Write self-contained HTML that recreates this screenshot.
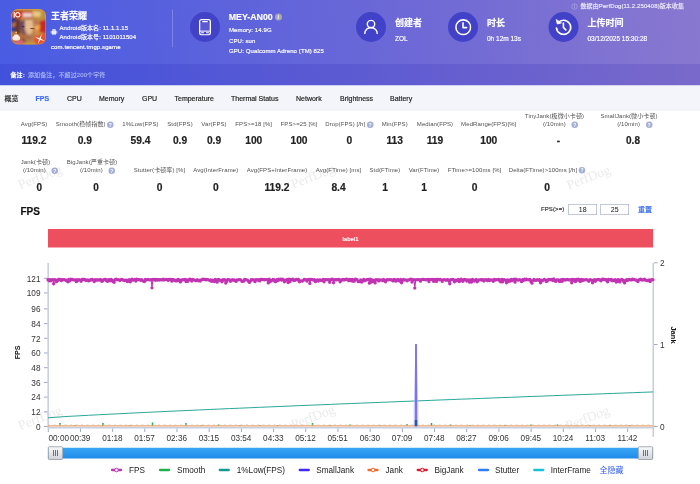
<!DOCTYPE html>
<html lang="zh"><head><meta charset="utf-8"><title>PerfDog</title><style>
html,body{margin:0;padding:0;background:#fff;}
body{width:700px;height:484px;overflow:hidden;position:relative;font-family:"Liberation Sans", "Noto Sans CJK SC", sans-serif;}
#s{position:absolute;left:0;top:0;width:1400px;height:968px;transform:scale(.5);transform-origin:0 0;overflow:hidden;background:#fff}
.t{position:absolute;white-space:nowrap;-webkit-text-stroke:.35px}
#hdr{position:absolute;left:0;top:0;width:1400px;height:171px;background:linear-gradient(83deg,#495ce3 0%,#5b62dc 30%,#6e69d6 60%,#8978cf 100%)}
#rem{position:absolute;left:0;top:128px;width:1400px;height:43px;background:rgba(20,10,170,.12)}
#tabs{position:absolute;left:0;top:171px;width:1400px;height:51px;background:#f4f5fa}
#appicon{position:absolute;left:21.500px;top:17.500px}
.circ{position:absolute;border-radius:50%;background:#4242c8}
.q{position:absolute;border-radius:50%;color:#fff;text-align:center;font-weight:bold;box-sizing:border-box}
.qi{display:inline-block;width:13px;height:13px;border-radius:50%;background:#a3aed6;color:#fff;font-size:10px;line-height:13px;text-align:center;font-weight:bold;vertical-align:-1px;margin-left:3px}
.wm{position:absolute;font-family:"Liberation Serif",serif;font-size:27px;color:#ebebeb;transform:translate(-50%,-50%) rotate(-21deg);white-space:nowrap}
.inp{position:absolute;height:21.500px;line-height:19px;border:1.500px solid #8791b6;box-sizing:border-box;text-align:center;font-size:14px;color:#111;background:#fff}
#lab{position:absolute;background:#ee4f5f;color:#fff;font-size:12px;text-align:center;-webkit-text-stroke:.3px}
</style></head><body><div id="s">
<div id="hdr"></div><div id="rem"></div><div id="tabs"></div>
<svg id="appicon" width="70" height="71" viewBox="0 0 70 71">
<defs><clipPath id="ic"><rect width="70" height="71" rx="14"/></clipPath>
<filter id="b2" x="-20%" y="-20%" width="140%" height="140%"><feGaussianBlur stdDeviation="2.300"/></filter>
<filter id="b1" x="-20%" y="-20%" width="140%" height="140%"><feGaussianBlur stdDeviation=".9"/></filter>
</defs>
<g clip-path="url(#ic)">
<rect width="70" height="71" fill="#c4913e"/>
<g filter="url(#b2)">
<rect x="-2" y="16" width="12" height="29" fill="#2c3a80"/>
<path d="M2 30 L11 24 L12 30 L3 38 Z" fill="#d08030"/>
<rect x="9" y="20" width="10" height="30" fill="#6a3428"/>
<path d="M29 4 L45 -1 L68 2 L70 24 L63 33.500 L57 25 L51 21 L41.500 21 L32 19 L28 13 Z" fill="#c0903f"/>
<path d="M41.500 4 L60 6 L58 16 L44.600 15 Z" fill="#e8ca82"/>
<path d="M28 7 L38 5 L38 19 L28 18 Z" fill="#8e5e2c"/>
<path d="M18.500 24 L29 19 L51 21 L57 25 L55 43 L49 55 L43 66 L32 67 L24.600 58 L18.500 43 Z" fill="#b87c52"/>
<path d="M27.700 22 L43 22 L44.600 37 L41.500 49 L34 51 L27.700 40 Z" fill="#e6bc90"/>
<path d="M17.700 25 L27.700 22 L27 43 L29 55 L21.500 49 L17.700 37 Z" fill="#6e4e62"/>
<path d="M57.700 24 L72 21 L72 49 L58.500 46 L56 43 Z" fill="#c62a20"/>
<path d="M44.600 40 L55 36 L54.600 46 L47.700 54 Z" fill="#d88848"/>
<path d="M47 33.500 L57.700 32 L57 42 L47.700 41 Z" fill="#f4b050"/>
<path d="M47.700 55 L72 48 L72 72 L44.600 72 Z" fill="#e8502e"/>
<path d="M0 49 L26 52 L26 72 L0 72 Z" fill="#b86838"/>
<path d="M24.600 58 L34 68 L27 72 L21 66 Z" fill="#6a3a2a"/>
<rect x="26" y="65.500" width="22" height="7" fill="#c89838"/>
<rect x="7.700" y="64" width="18" height="5" fill="#e06888"/>
<rect x="2.300" y="4.200" width="40.700" height="13.500" fill="#c02a1c"/>
<rect x="23" y="7.500" width="18.800" height="9" fill="#f0d0c8"/>
<path d="M29 55 L40 56.500 L39.700 58.300 L30 57.300 Z" fill="#8a4a3a"/>
</g>
<g filter="url(#b1)">
<ellipse cx="10.500" cy="58" rx="8" ry="5.200" fill="#f6e8d8"/>
<ellipse cx="10.500" cy="54" rx="5" ry="3.300" fill="#fff2e4"/>
<circle cx="10.300" cy="47" r="1.900" fill="#ffc460"/>
<path d="M38.500 37.800 L47.200 39 L47 40.600 L38.800 39.700 Z" fill="#4a2414"/>
<path d="M21.500 34.200 L27 35 L26.800 36.600 L21.800 36 Z" fill="#3a2436"/>
<circle cx="13.500" cy="11.500" r="4.300" fill="none" stroke="#ffeee2" stroke-width="2.300"/>
<circle cx="13.500" cy="11.500" r="2" fill="#d8281c"/>
<rect x="5.200" y="6" width="2.500" height="11.500" fill="#ffeee2"/>
<path d="M57.700 50 L59.200 58.500 L68 60 L59.200 61.500 L57.700 70 L56.200 61.500 L47.500 60 L56.200 58.500 Z" fill="#fff6ea" transform="rotate(22 57.700 60)"/>
</g>
<rect x=".75" y=".75" width="68.500" height="69.500" rx="13.500" fill="none" stroke="#dca844" stroke-width="1.500" opacity=".75"/>
</g></svg>
<div class="t" style="left:102px;top:18.5px;font-size:18px;line-height:25px;color:#fff;font-weight:bold;">王者荣耀</div>
<svg style="position:absolute;left:101px;top:57px" width="14" height="14" viewBox="0 0 14 14"><path d="M2.2 5.2h9.6v5.2a.9.9 0 0 1-.9.9H3.1a.9.9 0 0 1-.9-.9z M2.4 4.6a4.6 3.6 0 0 1 9.2 0z" fill="#e9ecff"/><rect x="0" y="5.2" width="1.7" height="4.6" rx=".8" fill="#e9ecff"/><rect x="12.3" y="5.2" width="1.7" height="4.6" rx=".8" fill="#e9ecff"/><rect x="4" y="10.5" width="1.8" height="3.2" rx=".8" fill="#e9ecff"/><rect x="8.2" y="10.5" width="1.8" height="3.2" rx=".8" fill="#e9ecff"/></svg>
<div class="t" style="left:119px;top:47.5px;font-size:12px;line-height:17px;color:#fff;letter-spacing:.2px;">Android版本名: 11.1.1.15</div>
<div class="t" style="left:119px;top:65.5px;font-size:12px;line-height:17px;color:#fff;letter-spacing:.2px;">Android版本号: 1101011504</div>
<div class="t" style="left:102px;top:84.5px;font-size:12px;line-height:17px;color:#fff;letter-spacing:.2px;">com.tencent.tmgp.sgame</div>
<div style="position:absolute;left:344px;top:19px;width:2px;height:75px;background:rgba(255,255,255,.22)"></div>
<div class="circ" style="left:379.6px;top:23.6px;width:60px;height:60px"></div>
<div class="circ" style="left:711.8px;top:23.6px;width:60px;height:60px"></div>
<div class="circ" style="left:896.4px;top:23.6px;width:60px;height:60px"></div>
<div class="circ" style="left:1096.5px;top:23.6px;width:60px;height:60px"></div>
<svg style="position:absolute;left:398px;top:37.700px" width="24" height="33" viewBox="0 0 24 33" fill="none" stroke="#fff"><rect x="1.300" y="1.300" width="21.400" height="30.400" rx="3.600" stroke-width="2.600"/><rect x="2.600" y="6.500" width="18.800" height="17.500" fill="rgba(255,255,255,.13)" stroke="none"/><path d="M6.500 5.200h11" stroke-width="2.800"/><path d="M2 24.300h20" stroke-width="2"/><path d="M4.200 27.600h5.600M14.200 27.600h5.600" stroke-width="2.200"/></svg>
<svg style="position:absolute;left:728.200px;top:39.300px" width="28" height="30" viewBox="0 0 28 30" fill="none" stroke="#fff" stroke-width="2.800" stroke-linecap="round"><circle cx="14" cy="9.200" r="7.400"/><path d="M1.600 28 A12.400 12 0 0 1 26.400 28"/></svg>
<svg style="position:absolute;left:910.400px;top:37.700px" width="33" height="33" viewBox="0 0 33 33" fill="none" stroke="#fff" stroke-width="3.200" stroke-linecap="round" stroke-linejoin="round"><circle cx="16.500" cy="16.500" r="14.700"/><path d="M16 7.500V17.200H23.300"/></svg>
<svg style="position:absolute;left:1110.400px;top:37px" width="34" height="34" viewBox="0 0 34 34" fill="none" stroke="#fff" stroke-width="3.400" stroke-linecap="round" stroke-linejoin="round"><path d="M6.200 8.600 A14.200 14.200 0 1 1 3 19"/><path d="M2.600 2.800 L4.600 11 L12.400 9 Z" fill="#fff" stroke-width="1.600"/><path d="M16.800 9V17.800L21.600 22.800" stroke-width="3.200"/></svg>
<div class="t" style="left:457.5px;top:21.3px;font-size:17.6px;line-height:25px;color:#fff;font-weight:bold;">MEY-AN00</div>
<div class="q" style="left:549.500px;top:27px;width:14px;height:14px;line-height:14px;font-size:11px;background:#a8a8ae;color:#fff;font-family:'Liberation Serif',serif;font-weight:bold;font-style:italic">i</div>
<div class="t" style="left:458px;top:51.5px;font-size:12px;line-height:17px;color:#fff;letter-spacing:.2px;">Memory: 14.9G</div>
<div class="t" style="left:458px;top:72.5px;font-size:12px;line-height:17px;color:#fff;letter-spacing:.2px;">CPU: sun</div>
<div class="t" style="left:458px;top:93.5px;font-size:12px;line-height:17px;color:#fff;letter-spacing:.2px;">GPU: Qualcomm Adreno (TM) 825</div>
<div class="t" style="left:790px;top:32.5px;font-size:18px;line-height:25px;color:#fff;font-weight:bold;">创建者</div>
<div class="t" style="left:790px;top:68.5px;font-size:13px;line-height:18px;color:#fff;">ZOL</div>
<div class="t" style="left:974px;top:32.5px;font-size:18px;line-height:25px;color:#fff;font-weight:bold;">时长</div>
<div class="t" style="left:974px;top:68.5px;font-size:13px;line-height:18px;color:#fff;">0h 12m 13s</div>
<div class="t" style="left:1175px;top:32.5px;font-size:18px;line-height:25px;color:#fff;font-weight:bold;">上传时间</div>
<div class="t" style="left:1175px;top:68.5px;font-size:13px;line-height:18px;color:#fff;">03/12/2025 15:30:28</div>
<div class="q" style="left:1142.500px;top:7px;width:12px;height:12px;line-height:10px;font-size:9px;background:none;border:1px solid rgba(255,255,255,.5);color:rgba(255,255,255,.6);font-weight:normal">i</div>
<div class="t" style="left:1161px;top:4.0px;font-size:12px;line-height:17px;color:rgba(255,255,255,.8);letter-spacing:.2px;">数据由PerfDog(11.2.250408)版本收集</div>
<div class="t" style="left:21px;top:141.5px;font-size:12px;line-height:17px;color:#fff;font-weight:bold;letter-spacing:.2px;">备注:</div>
<div class="t" style="left:56px;top:141.5px;font-size:12px;line-height:17px;color:#a9b6f3;letter-spacing:.2px;">添加备注，不超过200个字符</div>
<div class="t" style="left:9px;top:187.0px;font-size:14px;line-height:20px;color:#222;">概览</div>
<div class="t" style="left:71px;top:187.0px;font-size:14px;line-height:20px;color:#3d6bf0;font-weight:bold;">FPS</div>
<div class="t" style="left:134px;top:187.0px;font-size:14px;line-height:20px;color:#222;">CPU</div>
<div class="t" style="left:198px;top:187.0px;font-size:14px;line-height:20px;color:#222;">Memory</div>
<div class="t" style="left:284px;top:187.0px;font-size:14px;line-height:20px;color:#222;">GPU</div>
<div class="t" style="left:349px;top:187.0px;font-size:14px;line-height:20px;color:#222;">Temperature</div>
<div class="t" style="left:462px;top:187.0px;font-size:14px;line-height:20px;color:#222;">Thermal Status</div>
<div class="t" style="left:592px;top:187.0px;font-size:14px;line-height:20px;color:#222;">Network</div>
<div class="t" style="left:680px;top:187.0px;font-size:14px;line-height:20px;color:#222;">Brightness</div>
<div class="t" style="left:780px;top:187.0px;font-size:14px;line-height:20px;color:#222;">Battery</div>
<div class="wm" style="left:80px;top:354px">PerfDog</div>
<div class="wm" style="left:626px;top:353px">PerfDog</div>
<div class="wm" style="left:1177px;top:354.5px">PerfDog</div>
<div class="wm" style="left:80px;top:836px">PerfDog</div>
<div class="wm" style="left:626px;top:834px">PerfDog</div>
<div class="wm" style="left:1175px;top:835.5px">PerfDog</div>
<div class="t" style="left:68px;top:240.0px;font-size:12px;line-height:17px;color:#505050;letter-spacing:.2px;transform:translateX(-50%);-webkit-text-stroke:0;">Avg(FPS)</div>
<div class="t" style="left:68px;top:265.5px;font-size:20.5px;line-height:29px;color:#222;font-weight:bold;transform:translateX(-50%);">119.2</div>
<div class="t" style="left:169.5px;top:240.0px;font-size:12px;line-height:17px;color:#505050;letter-spacing:.2px;transform:translateX(-50%);-webkit-text-stroke:0;">Smooth(稳帧指数)<span class="qi">?</span></div>
<div class="t" style="left:169.5px;top:265.5px;font-size:20.5px;line-height:29px;color:#222;font-weight:bold;transform:translateX(-50%);">0.9</div>
<div class="t" style="left:281px;top:240.0px;font-size:12px;line-height:17px;color:#505050;letter-spacing:.2px;transform:translateX(-50%);-webkit-text-stroke:0;">1%Low(FPS)</div>
<div class="t" style="left:281px;top:265.5px;font-size:20.5px;line-height:29px;color:#222;font-weight:bold;transform:translateX(-50%);">59.4</div>
<div class="t" style="left:360px;top:240.0px;font-size:12px;line-height:17px;color:#505050;letter-spacing:.2px;transform:translateX(-50%);-webkit-text-stroke:0;">Std(FPS)</div>
<div class="t" style="left:360px;top:265.5px;font-size:20.5px;line-height:29px;color:#222;font-weight:bold;transform:translateX(-50%);">0.9</div>
<div class="t" style="left:428px;top:240.0px;font-size:12px;line-height:17px;color:#505050;letter-spacing:.2px;transform:translateX(-50%);-webkit-text-stroke:0;">Var(FPS)</div>
<div class="t" style="left:428px;top:265.5px;font-size:20.5px;line-height:29px;color:#222;font-weight:bold;transform:translateX(-50%);">0.9</div>
<div class="t" style="left:507.5px;top:240.0px;font-size:12px;line-height:17px;color:#505050;letter-spacing:.2px;transform:translateX(-50%);-webkit-text-stroke:0;">FPS&gt;=18 [%]</div>
<div class="t" style="left:507.5px;top:265.5px;font-size:20.5px;line-height:29px;color:#222;font-weight:bold;transform:translateX(-50%);">100</div>
<div class="t" style="left:598px;top:240.0px;font-size:12px;line-height:17px;color:#505050;letter-spacing:.2px;transform:translateX(-50%);-webkit-text-stroke:0;">FPS&gt;=25 [%]</div>
<div class="t" style="left:598px;top:265.5px;font-size:20.5px;line-height:29px;color:#222;font-weight:bold;transform:translateX(-50%);">100</div>
<div class="t" style="left:698.5px;top:240.0px;font-size:12px;line-height:17px;color:#505050;letter-spacing:.2px;transform:translateX(-50%);-webkit-text-stroke:0;">Drop(FPS) [/h]<span class="qi">?</span></div>
<div class="t" style="left:698.5px;top:265.5px;font-size:20.5px;line-height:29px;color:#222;font-weight:bold;transform:translateX(-50%);">0</div>
<div class="t" style="left:789.5px;top:240.0px;font-size:12px;line-height:17px;color:#505050;letter-spacing:.2px;transform:translateX(-50%);-webkit-text-stroke:0;">Min(FPS)</div>
<div class="t" style="left:789.5px;top:265.5px;font-size:20.5px;line-height:29px;color:#222;font-weight:bold;transform:translateX(-50%);">113</div>
<div class="t" style="left:870px;top:240.0px;font-size:12px;line-height:17px;color:#505050;letter-spacing:.2px;transform:translateX(-50%);-webkit-text-stroke:0;">Median(FPS)</div>
<div class="t" style="left:870px;top:265.5px;font-size:20.5px;line-height:29px;color:#222;font-weight:bold;transform:translateX(-50%);">119</div>
<div class="t" style="left:977.5px;top:240.0px;font-size:12px;line-height:17px;color:#505050;letter-spacing:.2px;transform:translateX(-50%);-webkit-text-stroke:0;">MedRange(FPS)[%]</div>
<div class="t" style="left:977.5px;top:265.5px;font-size:20.5px;line-height:29px;color:#222;font-weight:bold;transform:translateX(-50%);">100</div>
<div class="t" style="left:1109px;top:223.5px;font-size:12px;line-height:17px;color:#505050;letter-spacing:.2px;transform:translateX(-50%);-webkit-text-stroke:0;">TinyJank(极微小卡顿)</div>
<div class="t" style="left:1121px;top:239.5px;font-size:12px;line-height:17px;color:#505050;letter-spacing:.2px;transform:translateX(-50%);-webkit-text-stroke:0;">(/10min) <span class="qi" style="margin-left:8px">?</span></div>
<div class="t" style="left:1117px;top:266.0px;font-size:20px;line-height:28px;color:#222;font-weight:bold;transform:translateX(-50%);">-</div>
<div class="t" style="left:1258px;top:223.5px;font-size:12px;line-height:17px;color:#505050;letter-spacing:.2px;transform:translateX(-50%);-webkit-text-stroke:0;">SmallJank(微小卡顿)</div>
<div class="t" style="left:1269.5px;top:239.5px;font-size:12px;line-height:17px;color:#505050;letter-spacing:.2px;transform:translateX(-50%);-webkit-text-stroke:0;">(/10min) <span class="qi" style="margin-left:8px">?</span></div>
<div class="t" style="left:1266px;top:266.0px;font-size:20px;line-height:28px;color:#222;font-weight:bold;transform:translateX(-50%);">0.8</div>
<div class="t" style="left:71px;top:316.0px;font-size:12px;line-height:17px;color:#505050;letter-spacing:.2px;transform:translateX(-50%);-webkit-text-stroke:0;">Jank(卡顿)</div>
<div class="t" style="left:81px;top:331.5px;font-size:12px;line-height:17px;color:#505050;letter-spacing:.2px;transform:translateX(-50%);-webkit-text-stroke:0;">(/10min) <span class="qi" style="margin-left:8px">?</span></div>
<div class="t" style="left:78.5px;top:359.5px;font-size:20px;line-height:28px;color:#222;font-weight:bold;transform:translateX(-50%);">0</div>
<div class="t" style="left:184px;top:316.0px;font-size:12px;line-height:17px;color:#505050;letter-spacing:.2px;transform:translateX(-50%);-webkit-text-stroke:0;">BigJank(严重卡顿)</div>
<div class="t" style="left:195px;top:331.5px;font-size:12px;line-height:17px;color:#505050;letter-spacing:.2px;transform:translateX(-50%);-webkit-text-stroke:0;">(/10min) <span class="qi" style="margin-left:8px">?</span></div>
<div class="t" style="left:192px;top:359.5px;font-size:20px;line-height:28px;color:#222;font-weight:bold;transform:translateX(-50%);">0</div>
<div class="t" style="left:319px;top:330.5px;font-size:12px;line-height:17px;color:#505050;letter-spacing:.2px;transform:translateX(-50%);-webkit-text-stroke:0;">Stutter(卡顿率) [%]</div>
<div class="t" style="left:319px;top:359.0px;font-size:20.5px;line-height:29px;color:#222;font-weight:bold;transform:translateX(-50%);">0</div>
<div class="t" style="left:431.5px;top:330.5px;font-size:12px;line-height:17px;color:#505050;letter-spacing:.2px;transform:translateX(-50%);-webkit-text-stroke:0;">Avg(InterFrame)</div>
<div class="t" style="left:431.5px;top:359.0px;font-size:20.5px;line-height:29px;color:#222;font-weight:bold;transform:translateX(-50%);">0</div>
<div class="t" style="left:554px;top:330.5px;font-size:12px;line-height:17px;color:#505050;letter-spacing:.2px;transform:translateX(-50%);-webkit-text-stroke:0;">Avg(FPS+InterFrame)</div>
<div class="t" style="left:554px;top:359.0px;font-size:20.5px;line-height:29px;color:#222;font-weight:bold;transform:translateX(-50%);">119.2</div>
<div class="t" style="left:677px;top:330.5px;font-size:12px;line-height:17px;color:#505050;letter-spacing:.2px;transform:translateX(-50%);-webkit-text-stroke:0;">Avg(FTime) [ms]</div>
<div class="t" style="left:677px;top:359.0px;font-size:20.5px;line-height:29px;color:#222;font-weight:bold;transform:translateX(-50%);">8.4</div>
<div class="t" style="left:770px;top:330.5px;font-size:12px;line-height:17px;color:#505050;letter-spacing:.2px;transform:translateX(-50%);-webkit-text-stroke:0;">Std(FTime)</div>
<div class="t" style="left:770px;top:359.0px;font-size:20.5px;line-height:29px;color:#222;font-weight:bold;transform:translateX(-50%);">1</div>
<div class="t" style="left:848px;top:330.5px;font-size:12px;line-height:17px;color:#505050;letter-spacing:.2px;transform:translateX(-50%);-webkit-text-stroke:0;">Var(FTime)</div>
<div class="t" style="left:848px;top:359.0px;font-size:20.5px;line-height:29px;color:#222;font-weight:bold;transform:translateX(-50%);">1</div>
<div class="t" style="left:949px;top:330.5px;font-size:12px;line-height:17px;color:#505050;letter-spacing:.2px;transform:translateX(-50%);-webkit-text-stroke:0;">FTime&gt;=100ms [%]</div>
<div class="t" style="left:949px;top:359.0px;font-size:20.5px;line-height:29px;color:#222;font-weight:bold;transform:translateX(-50%);">0</div>
<div class="t" style="left:1094px;top:330.5px;font-size:12px;line-height:17px;color:#505050;letter-spacing:.2px;transform:translateX(-50%);-webkit-text-stroke:0;">Delta(FTime)&gt;100ms [/h]<span class="qi">?</span></div>
<div class="t" style="left:1094px;top:359.0px;font-size:20.5px;line-height:29px;color:#222;font-weight:bold;transform:translateX(-50%);">0</div>
<div class="t" style="left:41px;top:409.0px;font-size:20px;line-height:28px;color:#111;font-weight:bold;">FPS</div>
<div class="t" style="left:1082px;top:410.0px;font-size:12px;line-height:17px;color:#333;letter-spacing:.2px;">FPS(&gt;=)</div>
<div class="inp" style="left:1137px;top:408px;width:57px">18</div>
<div class="inp" style="left:1201px;top:408px;width:57px">25</div>
<div class="t" style="left:1276px;top:408.5px;font-size:14px;line-height:20px;color:#2b62f0;">重置</div>
<div id="lab" style="left:96px;top:457.500px;width:1210px;height:37.500px;line-height:41px">label1</div>
<svg id="chart" width="1400" height="968" viewBox="0 0 1400 968" style="position:absolute;left:0;top:0" font-family='"Liberation Sans", "Noto Sans CJK SC", sans-serif'>
<path d="M96.3 526V856.0 M1306.5 526V874.0" stroke="#c6cde0" stroke-width="3" fill="none"/>
<path d="M95 855.5H1308" stroke="#c6cde0" stroke-width="3" fill="none"/>
<path d="M88 853.0H95" stroke="#9ea9c4" stroke-width="2"/>
<text x="81" y="859.5" font-size="16.500" fill="#333" text-anchor="end">0</text>
<path d="M88 823.6H95" stroke="#9ea9c4" stroke-width="2"/>
<text x="81" y="830.1" font-size="16.500" fill="#333" text-anchor="end">12</text>
<path d="M88 794.2H95" stroke="#9ea9c4" stroke-width="2"/>
<text x="81" y="800.7" font-size="16.500" fill="#333" text-anchor="end">24</text>
<path d="M88 764.8H95" stroke="#9ea9c4" stroke-width="2"/>
<text x="81" y="771.3" font-size="16.500" fill="#333" text-anchor="end">36</text>
<path d="M88 735.4H95" stroke="#9ea9c4" stroke-width="2"/>
<text x="81" y="741.9" font-size="16.500" fill="#333" text-anchor="end">48</text>
<path d="M88 706.0H95" stroke="#9ea9c4" stroke-width="2"/>
<text x="81" y="712.5" font-size="16.500" fill="#333" text-anchor="end">60</text>
<path d="M88 676.6H95" stroke="#9ea9c4" stroke-width="2"/>
<text x="81" y="683.1" font-size="16.500" fill="#333" text-anchor="end">72</text>
<path d="M88 647.2H95" stroke="#9ea9c4" stroke-width="2"/>
<text x="81" y="653.7" font-size="16.500" fill="#333" text-anchor="end">84</text>
<path d="M88 617.8H95" stroke="#9ea9c4" stroke-width="2"/>
<text x="81" y="624.3" font-size="16.500" fill="#333" text-anchor="end">96</text>
<path d="M88 585.9H95" stroke="#9ea9c4" stroke-width="2"/>
<text x="81" y="592.4" font-size="16.500" fill="#333" text-anchor="end">109</text>
<path d="M88 556.5H95" stroke="#9ea9c4" stroke-width="2"/>
<text x="81" y="563.0" font-size="16.500" fill="#333" text-anchor="end">121</text>
<path d="M1308 525.5H1315" stroke="#9ea9c4" stroke-width="2"/>
<text x="1320" y="532.0" font-size="16.500" fill="#333">2</text>
<path d="M1308 689H1315" stroke="#9ea9c4" stroke-width="2"/>
<text x="1320" y="695.5" font-size="16.500" fill="#333">1</text>
<path d="M1308 853H1315" stroke="#9ea9c4" stroke-width="2"/>
<text x="1320" y="859.5" font-size="16.500" fill="#333">0</text>
<path d="M96.5 857.0V864.0" stroke="#9ea9c4" stroke-width="2"/>
<text x="97" y="881.0" font-size="16.400" fill="#333">00:00</text>
<path d="M160.9 857.0V864.0" stroke="#9ea9c4" stroke-width="2"/>
<text x="160.4" y="881.0" font-size="16.400" fill="#333" text-anchor="middle">00:39</text>
<path d="M225.3 857.0V864.0" stroke="#9ea9c4" stroke-width="2"/>
<text x="224.8" y="881.0" font-size="16.400" fill="#333" text-anchor="middle">01:18</text>
<path d="M289.6 857.0V864.0" stroke="#9ea9c4" stroke-width="2"/>
<text x="289.1" y="881.0" font-size="16.400" fill="#333" text-anchor="middle">01:57</text>
<path d="M354.0 857.0V864.0" stroke="#9ea9c4" stroke-width="2"/>
<text x="353.5" y="881.0" font-size="16.400" fill="#333" text-anchor="middle">02:36</text>
<path d="M418.4 857.0V864.0" stroke="#9ea9c4" stroke-width="2"/>
<text x="417.9" y="881.0" font-size="16.400" fill="#333" text-anchor="middle">03:15</text>
<path d="M482.8 857.0V864.0" stroke="#9ea9c4" stroke-width="2"/>
<text x="482.3" y="881.0" font-size="16.400" fill="#333" text-anchor="middle">03:54</text>
<path d="M547.2 857.0V864.0" stroke="#9ea9c4" stroke-width="2"/>
<text x="546.7" y="881.0" font-size="16.400" fill="#333" text-anchor="middle">04:33</text>
<path d="M611.5 857.0V864.0" stroke="#9ea9c4" stroke-width="2"/>
<text x="611.0" y="881.0" font-size="16.400" fill="#333" text-anchor="middle">05:12</text>
<path d="M675.9 857.0V864.0" stroke="#9ea9c4" stroke-width="2"/>
<text x="675.4" y="881.0" font-size="16.400" fill="#333" text-anchor="middle">05:51</text>
<path d="M740.3 857.0V864.0" stroke="#9ea9c4" stroke-width="2"/>
<text x="739.8" y="881.0" font-size="16.400" fill="#333" text-anchor="middle">06:30</text>
<path d="M804.7 857.0V864.0" stroke="#9ea9c4" stroke-width="2"/>
<text x="804.2" y="881.0" font-size="16.400" fill="#333" text-anchor="middle">07:09</text>
<path d="M869.1 857.0V864.0" stroke="#9ea9c4" stroke-width="2"/>
<text x="868.6" y="881.0" font-size="16.400" fill="#333" text-anchor="middle">07:48</text>
<path d="M933.4 857.0V864.0" stroke="#9ea9c4" stroke-width="2"/>
<text x="932.9" y="881.0" font-size="16.400" fill="#333" text-anchor="middle">08:27</text>
<path d="M997.8 857.0V864.0" stroke="#9ea9c4" stroke-width="2"/>
<text x="997.3" y="881.0" font-size="16.400" fill="#333" text-anchor="middle">09:06</text>
<path d="M1062.2 857.0V864.0" stroke="#9ea9c4" stroke-width="2"/>
<text x="1061.7" y="881.0" font-size="16.400" fill="#333" text-anchor="middle">09:45</text>
<path d="M1126.6 857.0V864.0" stroke="#9ea9c4" stroke-width="2"/>
<text x="1126.1" y="881.0" font-size="16.400" fill="#333" text-anchor="middle">10:24</text>
<path d="M1190.9 857.0V864.0" stroke="#9ea9c4" stroke-width="2"/>
<text x="1190.4" y="881.0" font-size="16.400" fill="#333" text-anchor="middle">11:03</text>
<path d="M1255.3 857.0V864.0" stroke="#9ea9c4" stroke-width="2"/>
<text x="1254.8" y="881.0" font-size="16.400" fill="#333" text-anchor="middle">11:42</text>
<text transform="translate(40,705) rotate(-90)" font-size="14" font-weight="bold" fill="#111" text-anchor="middle">FPS</text>
<text transform="translate(1342,670) rotate(90)" font-size="15" font-weight="bold" fill="#111" text-anchor="middle">Jank</text>
<polyline points="96.0,835.6 116.2,834.1 136.3,832.8 156.5,831.7 176.7,830.6 196.8,829.5 217.0,828.5 237.2,827.5 257.3,826.5 277.5,825.5 297.7,824.5 317.8,823.6 338.0,822.6 358.2,821.7 378.3,820.8 398.5,819.9 418.7,819.0 438.8,818.1 459.0,817.2 479.2,816.4 499.3,815.5 519.5,814.6 539.7,813.8 559.8,812.9 580.0,812.1 600.2,811.2 620.3,810.4 640.5,809.6 660.7,808.8 680.8,807.9 701.0,807.1 721.2,806.3 741.3,805.5 761.5,804.7 781.7,803.9 801.8,803.1 822.0,802.3 842.2,801.5 862.3,800.7 882.5,799.9 902.7,799.1 922.8,798.3 943.0,797.6 963.2,796.8 983.3,796.0 1003.5,795.2 1023.7,794.5 1043.8,793.7 1064.0,792.9 1084.2,792.2 1104.3,791.4 1124.5,790.6 1144.7,789.9 1164.8,789.1 1185.0,788.4 1205.2,787.6 1225.3,786.9 1245.5,786.1 1265.7,785.4 1285.8,784.6 1306.0,783.9" fill="none" stroke="#2aa79b" stroke-width="2"/>
<path d="M120 852.0v-6M206 852.0v-6M305 852.0v-7.0M372 852.0v-6M625 852.0v-6M814 852.0v-4M863 852.0v-6M403 852.0v-2M437 852.0v-3.0M555 852.0v-2M700 852.0v-3.0M760 852.0v-2M901 852.0v-3.0M1010 852.0v-2M1062 852.0v-3.0M1115 852.0v-3.0M1180 852.0v-2M1260 852.0v-2M150 852.0v-2M260 852.0v-2M480 852.0v-2M520 852.0v-2M660 852.0v-2M940 852.0v-2M1220 852.0v-2" stroke="#19b24b" stroke-width="3" fill="none"/>
<path d="M96 851.5H1306" stroke="#e9a070" stroke-width="2.500" fill="none"/>
<path d="M96 849.5H1306" stroke="#d8c9a0" stroke-width="1.500" stroke-dasharray="4 7" fill="none" opacity=".8"/>
<path d="M827.5 853.0V813.0L831 689h2L836.5 813.0V853.0Z" fill="#b2aefa" opacity=".7"/>
<path d="M832 853.0V688" stroke="#6258f0" stroke-width="3" fill="none"/>
<rect x="829.5" y="840.0" width="5" height="12" fill="#2b5a9a"/>
<polyline points="96.0,559.5 97.9,561.7 99.8,559.4 101.7,561.5 103.6,559.1 105.5,559.2 107.3,567.5 109.2,559.1 111.1,559.8 113.0,563.3 114.9,561.4 116.8,559.0 118.7,559.0 120.6,558.7 122.5,561.1 124.4,559.4 126.2,559.7 128.1,559.1 130.0,559.6 131.9,561.2 133.8,560.4 135.7,563.6 137.6,558.9 139.5,561.5 141.4,558.5 143.3,559.1 145.2,559.0 147.0,559.6 148.9,559.8 150.8,559.6 152.7,563.3 154.6,559.2 156.5,560.5 158.4,559.4 160.3,560.1 162.2,562.7 164.1,559.0 166.0,559.0 167.8,558.8 169.7,559.0 171.6,561.2 173.5,560.3 175.4,559.8 177.3,561.9 179.2,561.0 181.1,559.3 183.0,559.8 184.9,558.8 186.8,560.1 188.6,563.2 190.5,559.1 192.4,560.4 194.3,559.5 196.2,560.4 198.1,559.2 200.0,560.0 201.9,559.2 203.8,562.9 205.7,561.6 207.5,559.5 209.4,558.6 211.3,558.6 213.2,561.6 215.1,562.9 217.0,559.3 218.9,559.2 220.8,561.6 222.7,558.8 224.6,560.9 226.5,563.4 228.3,564.7 230.2,559.5 232.1,558.3 234.0,559.4 235.9,559.3 237.8,559.7 239.7,561.0 241.6,559.3 243.5,558.8 245.4,559.5 247.2,560.5 249.1,561.1 251.0,560.1 252.9,560.1 254.8,563.0 256.7,560.1 258.6,559.1 260.5,563.7 262.4,559.8 264.3,558.5 266.2,560.4 268.0,559.9 269.9,558.6 271.8,562.0 273.7,558.5 275.6,559.4 277.5,559.3 279.4,559.3 281.3,560.6 283.2,559.5 285.1,561.1 287.0,562.5 288.8,563.2 290.7,558.8 292.6,560.0 294.5,559.1 296.4,558.8 298.3,559.6 300.2,559.7 302.1,559.3 304.0,575.6 305.9,558.8 307.8,559.6 309.6,558.7 311.5,560.6 313.4,558.9 315.3,560.0 317.2,559.4 319.1,560.0 321.0,559.1 322.9,559.5 324.8,559.9 326.7,558.5 328.5,559.6 330.4,559.4 332.3,558.6 334.2,559.1 336.1,560.9 338.0,558.6 339.9,559.0 341.8,558.8 343.7,562.4 345.6,558.9 347.5,559.4 349.3,560.9 351.2,561.5 353.1,561.8 355.0,559.4 356.9,558.6 358.8,561.3 360.7,563.9 362.6,559.8 364.5,560.2 366.4,559.4 368.2,559.4 370.1,559.0 372.0,563.1 373.9,559.7 375.8,562.6 377.7,559.5 379.6,558.2 381.5,558.8 383.4,562.1 385.3,558.8 387.2,559.7 389.0,560.1 390.9,561.2 392.8,561.0 394.7,559.5 396.6,561.5 398.5,560.9 400.4,562.2 402.3,559.7 404.2,559.4 406.1,558.5 408.0,558.7 409.8,559.0 411.7,559.8 413.6,558.8 415.5,559.4 417.4,559.7 419.3,561.1 421.2,560.0 423.1,562.6 425.0,560.5 426.9,562.3 428.8,563.0 430.6,558.8 432.5,559.7 434.4,564.4 436.3,558.8 438.2,559.3 440.1,560.9 442.0,561.0 443.9,563.7 445.8,559.3 447.7,560.2 449.5,559.5 451.4,566.2 453.3,563.0 455.2,559.4 457.1,559.4 459.0,559.9 460.9,562.6 462.8,560.3 464.7,559.3 466.6,560.3 468.5,559.9 470.3,561.4 472.2,562.8 474.1,560.0 476.0,559.6 477.9,559.4 479.8,559.3 481.7,560.0 483.6,562.7 485.5,562.6 487.4,562.4 489.2,558.7 491.1,559.4 493.0,559.7 494.9,560.2 496.8,562.4 498.7,564.9 500.6,562.3 502.5,559.3 504.4,559.5 506.3,559.7 508.2,559.6 510.0,563.4 511.9,559.2 513.8,559.4 515.7,560.4 517.6,559.4 519.5,561.8 521.4,558.6 523.3,558.6 525.2,558.6 527.1,559.4 529.0,559.7 530.8,559.3 532.7,559.3 534.6,559.4 536.5,565.8 538.4,558.4 540.3,563.2 542.2,561.8 544.1,560.4 546.0,558.6 547.9,559.3 549.8,563.0 551.6,563.1 553.5,559.3 555.4,561.1 557.3,558.2 559.2,559.6 561.1,558.2 563.0,560.0 564.9,558.5 566.8,559.1 568.7,563.5 570.5,562.2 572.4,559.6 574.3,558.9 576.2,565.1 578.1,558.5 580.0,563.0 581.9,559.0 583.8,559.1 585.7,558.2 587.6,561.2 589.5,560.8 591.3,559.4 593.2,558.6 595.1,559.8 597.0,559.0 598.9,563.5 600.8,561.7 602.7,561.9 604.6,562.4 606.5,560.6 608.4,558.9 610.2,559.2 612.1,559.3 614.0,562.3 615.9,559.2 617.8,558.8 619.7,566.8 621.6,558.9 623.5,558.8 625.4,559.5 627.3,560.1 629.2,559.5 631.0,563.3 632.9,561.4 634.8,559.7 636.7,562.1 638.6,559.6 640.5,559.6 642.4,561.0 644.3,560.6 646.2,559.0 648.1,563.7 650.0,559.3 651.8,559.4 653.7,559.2 655.6,559.7 657.5,559.1 659.4,564.5 661.3,559.2 663.2,559.0 665.1,558.4 667.0,565.6 668.9,559.6 670.8,559.3 672.6,559.8 674.5,559.2 676.4,559.0 678.3,559.0 680.2,563.5 682.1,561.4 684.0,559.2 685.9,558.7 687.8,559.9 689.7,559.5 691.5,559.0 693.4,558.5 695.3,559.2 697.2,561.4 699.1,559.0 701.0,559.1 702.9,561.5 704.8,558.9 706.7,562.7 708.6,562.3 710.5,558.5 712.3,558.8 714.2,559.2 716.1,563.1 718.0,562.6 719.9,563.0 721.8,559.6 723.7,564.1 725.6,561.9 727.5,558.7 729.4,561.4 731.2,560.7 733.1,559.1 735.0,559.3 736.9,558.7 738.8,566.3 740.7,558.4 742.6,564.1 744.5,560.0 746.4,562.7 748.3,560.7 750.2,565.9 752.0,559.2 753.9,560.2 755.8,559.4 757.7,561.8 759.6,559.9 761.5,559.7 763.4,560.1 765.3,561.4 767.2,558.6 769.1,561.1 771.0,563.5 772.8,559.7 774.7,559.5 776.6,559.7 778.5,559.3 780.4,559.1 782.3,559.3 784.2,560.6 786.1,561.9 788.0,558.6 789.9,559.4 791.8,562.4 793.6,559.8 795.5,558.7 797.4,561.0 799.3,562.0 801.2,559.0 803.1,565.5 805.0,561.2 806.9,559.0 808.8,559.7 810.7,559.9 812.5,560.4 814.4,561.5 816.3,559.8 818.2,559.6 820.1,558.7 822.0,558.1 823.9,564.0 825.8,559.3 827.7,559.3 829.6,576.1 831.5,559.8 833.3,559.3 835.2,559.2 837.1,559.1 839.0,559.4 840.9,562.3 842.8,559.3 844.7,558.8 846.6,558.9 848.5,559.2 850.4,559.1 852.2,559.5 854.1,559.3 856.0,558.7 857.9,563.2 859.8,559.2 861.7,558.8 863.6,559.2 865.5,559.0 867.4,562.8 869.3,559.1 871.2,558.6 873.0,562.8 874.9,558.8 876.8,558.8 878.7,559.5 880.6,558.8 882.5,559.6 884.4,562.8 886.3,559.7 888.2,559.3 890.1,559.6 892.0,560.6 893.8,559.5 895.7,559.2 897.6,561.9 899.5,567.5 901.4,559.5 903.3,559.3 905.2,559.0 907.1,559.4 909.0,563.5 910.9,560.3 912.8,561.7 914.6,559.6 916.5,558.9 918.4,563.0 920.3,562.1 922.2,558.3 924.1,559.2 926.0,562.7 927.9,559.2 929.8,559.0 931.7,559.1 933.5,562.2 935.4,559.7 937.3,559.7 939.2,564.4 941.1,559.9 943.0,564.2 944.9,558.7 946.8,559.9 948.7,562.0 950.6,561.4 952.5,559.0 954.3,563.7 956.2,561.2 958.1,559.7 960.0,559.7 961.9,559.1 963.8,560.0 965.7,559.5 967.6,562.0 969.5,559.6 971.4,559.5 973.2,559.9 975.1,561.4 977.0,558.7 978.9,561.0 980.8,559.7 982.7,559.9 984.6,560.5 986.5,562.7 988.4,558.7 990.3,560.3 992.2,559.3 994.0,559.4 995.9,559.1 997.8,559.0 999.7,561.9 1001.6,563.9 1003.5,558.6 1005.4,563.6 1007.3,559.3 1009.2,559.9 1011.1,560.4 1013.0,565.5 1014.8,559.7 1016.7,563.0 1018.6,560.2 1020.5,562.0 1022.4,559.0 1024.3,561.2 1026.2,559.2 1028.1,558.4 1030.0,564.4 1031.9,558.3 1033.8,559.9 1035.6,559.9 1037.5,560.3 1039.4,559.1 1041.3,560.1 1043.2,563.4 1045.1,559.5 1047.0,560.5 1048.9,558.3 1050.8,559.6 1052.7,558.5 1054.5,559.1 1056.4,559.3 1058.3,559.5 1060.2,558.9 1062.1,564.0 1064.0,566.3 1065.9,561.1 1067.8,558.8 1069.7,560.1 1071.6,560.9 1073.5,559.6 1075.3,559.2 1077.2,560.7 1079.1,559.5 1081.0,565.7 1082.9,560.4 1084.8,561.6 1086.7,560.2 1088.6,559.0 1090.5,559.7 1092.4,563.0 1094.2,562.7 1096.1,559.3 1098.0,558.7 1099.9,559.3 1101.8,559.1 1103.7,558.7 1105.6,561.1 1107.5,558.0 1109.4,559.6 1111.3,562.8 1113.2,559.6 1115.0,560.2 1116.9,559.8 1118.8,562.8 1120.7,562.8 1122.6,559.3 1124.5,562.6 1126.4,558.6 1128.3,559.3 1130.2,560.2 1132.1,559.5 1134.0,559.0 1135.8,559.3 1137.7,559.6 1139.6,559.6 1141.5,559.5 1143.4,565.6 1145.3,559.0 1147.2,561.2 1149.1,559.1 1151.0,563.2 1152.9,558.9 1154.8,560.4 1156.6,558.5 1158.5,559.1 1160.4,563.2 1162.3,559.0 1164.2,561.3 1166.1,559.1 1168.0,560.1 1169.9,559.6 1171.8,559.3 1173.7,559.4 1175.5,560.5 1177.4,562.6 1179.3,559.9 1181.2,559.2 1183.1,560.1 1185.0,565.7 1186.9,562.1 1188.8,559.1 1190.7,562.5 1192.6,560.0 1194.5,559.1 1196.3,559.0 1198.2,559.5 1200.1,559.8 1202.0,561.6 1203.9,558.8 1205.8,558.5 1207.7,558.8 1209.6,558.9 1211.5,560.1 1213.4,559.4 1215.2,563.6 1217.1,558.6 1219.0,559.3 1220.9,559.6 1222.8,558.9 1224.7,561.5 1226.6,560.1 1228.5,560.6 1230.4,559.4 1232.3,564.1 1234.2,563.1 1236.0,559.1 1237.9,559.7 1239.8,563.8 1241.7,559.8 1243.6,558.7 1245.5,559.8 1247.4,562.9 1249.3,565.8 1251.2,560.8 1253.1,559.3 1255.0,561.0 1256.8,559.5 1258.7,558.7 1260.6,559.6 1262.5,559.8 1264.4,558.4 1266.3,559.0 1268.2,558.7 1270.1,559.6 1272.0,559.9 1273.9,561.3 1275.8,563.1 1277.6,559.8 1279.5,558.8 1281.4,558.3 1283.3,559.9 1285.2,560.3 1287.1,559.1 1289.0,558.5 1290.9,560.4 1292.8,560.6 1294.7,561.4 1296.5,561.4 1298.4,560.0 1300.3,563.0 1302.2,560.0 1304.1,559.2 1306.0,559.7" fill="none" stroke="#c233b3" stroke-width="2.200" stroke-linejoin="round"/>
<path d="M96.0 559.5h.01M97.9 561.7h.01M99.8 559.4h.01M101.7 561.5h.01M103.6 559.1h.01M105.5 559.2h.01M107.3 567.5h.01M109.2 559.1h.01M111.1 559.8h.01M113.0 563.3h.01M114.9 561.4h.01M116.8 559.0h.01M118.7 559.0h.01M120.6 558.7h.01M122.5 561.1h.01M124.4 559.4h.01M126.2 559.7h.01M128.1 559.1h.01M130.0 559.6h.01M131.9 561.2h.01M133.8 560.4h.01M135.7 563.6h.01M137.6 558.9h.01M139.5 561.5h.01M141.4 558.5h.01M143.3 559.1h.01M145.2 559.0h.01M147.0 559.6h.01M148.9 559.8h.01M150.8 559.6h.01M152.7 563.3h.01M154.6 559.2h.01M156.5 560.5h.01M158.4 559.4h.01M160.3 560.1h.01M162.2 562.7h.01M164.1 559.0h.01M166.0 559.0h.01M167.8 558.8h.01M169.7 559.0h.01M171.6 561.2h.01M173.5 560.3h.01M175.4 559.8h.01M177.3 561.9h.01M179.2 561.0h.01M181.1 559.3h.01M183.0 559.8h.01M184.9 558.8h.01M186.8 560.1h.01M188.6 563.2h.01M190.5 559.1h.01M192.4 560.4h.01M194.3 559.5h.01M196.2 560.4h.01M198.1 559.2h.01M200.0 560.0h.01M201.9 559.2h.01M203.8 562.9h.01M205.7 561.6h.01M207.5 559.5h.01M209.4 558.6h.01M211.3 558.6h.01M213.2 561.6h.01M215.1 562.9h.01M217.0 559.3h.01M218.9 559.2h.01M220.8 561.6h.01M222.7 558.8h.01M224.6 560.9h.01M226.5 563.4h.01M228.3 564.7h.01M230.2 559.5h.01M232.1 558.3h.01M234.0 559.4h.01M235.9 559.3h.01M237.8 559.7h.01M239.7 561.0h.01M241.6 559.3h.01M243.5 558.8h.01M245.4 559.5h.01M247.2 560.5h.01M249.1 561.1h.01M251.0 560.1h.01M252.9 560.1h.01M254.8 563.0h.01M256.7 560.1h.01M258.6 559.1h.01M260.5 563.7h.01M262.4 559.8h.01M264.3 558.5h.01M266.2 560.4h.01M268.0 559.9h.01M269.9 558.6h.01M271.8 562.0h.01M273.7 558.5h.01M275.6 559.4h.01M277.5 559.3h.01M279.4 559.3h.01M281.3 560.6h.01M283.2 559.5h.01M285.1 561.1h.01M287.0 562.5h.01M288.8 563.2h.01M290.7 558.8h.01M292.6 560.0h.01M294.5 559.1h.01M296.4 558.8h.01M298.3 559.6h.01M300.2 559.7h.01M302.1 559.3h.01M304.0 575.6h.01M305.9 558.8h.01M307.8 559.6h.01M309.6 558.7h.01M311.5 560.6h.01M313.4 558.9h.01M315.3 560.0h.01M317.2 559.4h.01M319.1 560.0h.01M321.0 559.1h.01M322.9 559.5h.01M324.8 559.9h.01M326.7 558.5h.01M328.5 559.6h.01M330.4 559.4h.01M332.3 558.6h.01M334.2 559.1h.01M336.1 560.9h.01M338.0 558.6h.01M339.9 559.0h.01M341.8 558.8h.01M343.7 562.4h.01M345.6 558.9h.01M347.5 559.4h.01M349.3 560.9h.01M351.2 561.5h.01M353.1 561.8h.01M355.0 559.4h.01M356.9 558.6h.01M358.8 561.3h.01M360.7 563.9h.01M362.6 559.8h.01M364.5 560.2h.01M366.4 559.4h.01M368.2 559.4h.01M370.1 559.0h.01M372.0 563.1h.01M373.9 559.7h.01M375.8 562.6h.01M377.7 559.5h.01M379.6 558.2h.01M381.5 558.8h.01M383.4 562.1h.01M385.3 558.8h.01M387.2 559.7h.01M389.0 560.1h.01M390.9 561.2h.01M392.8 561.0h.01M394.7 559.5h.01M396.6 561.5h.01M398.5 560.9h.01M400.4 562.2h.01M402.3 559.7h.01M404.2 559.4h.01M406.1 558.5h.01M408.0 558.7h.01M409.8 559.0h.01M411.7 559.8h.01M413.6 558.8h.01M415.5 559.4h.01M417.4 559.7h.01M419.3 561.1h.01M421.2 560.0h.01M423.1 562.6h.01M425.0 560.5h.01M426.9 562.3h.01M428.8 563.0h.01M430.6 558.8h.01M432.5 559.7h.01M434.4 564.4h.01M436.3 558.8h.01M438.2 559.3h.01M440.1 560.9h.01M442.0 561.0h.01M443.9 563.7h.01M445.8 559.3h.01M447.7 560.2h.01M449.5 559.5h.01M451.4 566.2h.01M453.3 563.0h.01M455.2 559.4h.01M457.1 559.4h.01M459.0 559.9h.01M460.9 562.6h.01M462.8 560.3h.01M464.7 559.3h.01M466.6 560.3h.01M468.5 559.9h.01M470.3 561.4h.01M472.2 562.8h.01M474.1 560.0h.01M476.0 559.6h.01M477.9 559.4h.01M479.8 559.3h.01M481.7 560.0h.01M483.6 562.7h.01M485.5 562.6h.01M487.4 562.4h.01M489.2 558.7h.01M491.1 559.4h.01M493.0 559.7h.01M494.9 560.2h.01M496.8 562.4h.01M498.7 564.9h.01M500.6 562.3h.01M502.5 559.3h.01M504.4 559.5h.01M506.3 559.7h.01M508.2 559.6h.01M510.0 563.4h.01M511.9 559.2h.01M513.8 559.4h.01M515.7 560.4h.01M517.6 559.4h.01M519.5 561.8h.01M521.4 558.6h.01M523.3 558.6h.01M525.2 558.6h.01M527.1 559.4h.01M529.0 559.7h.01M530.8 559.3h.01M532.7 559.3h.01M534.6 559.4h.01M536.5 565.8h.01M538.4 558.4h.01M540.3 563.2h.01M542.2 561.8h.01M544.1 560.4h.01M546.0 558.6h.01M547.9 559.3h.01M549.8 563.0h.01M551.6 563.1h.01M553.5 559.3h.01M555.4 561.1h.01M557.3 558.2h.01M559.2 559.6h.01M561.1 558.2h.01M563.0 560.0h.01M564.9 558.5h.01M566.8 559.1h.01M568.7 563.5h.01M570.5 562.2h.01M572.4 559.6h.01M574.3 558.9h.01M576.2 565.1h.01M578.1 558.5h.01M580.0 563.0h.01M581.9 559.0h.01M583.8 559.1h.01M585.7 558.2h.01M587.6 561.2h.01M589.5 560.8h.01M591.3 559.4h.01M593.2 558.6h.01M595.1 559.8h.01M597.0 559.0h.01M598.9 563.5h.01M600.8 561.7h.01M602.7 561.9h.01M604.6 562.4h.01M606.5 560.6h.01M608.4 558.9h.01M610.2 559.2h.01M612.1 559.3h.01M614.0 562.3h.01M615.9 559.2h.01M617.8 558.8h.01M619.7 566.8h.01M621.6 558.9h.01M623.5 558.8h.01M625.4 559.5h.01M627.3 560.1h.01M629.2 559.5h.01M631.0 563.3h.01M632.9 561.4h.01M634.8 559.7h.01M636.7 562.1h.01M638.6 559.6h.01M640.5 559.6h.01M642.4 561.0h.01M644.3 560.6h.01M646.2 559.0h.01M648.1 563.7h.01M650.0 559.3h.01M651.8 559.4h.01M653.7 559.2h.01M655.6 559.7h.01M657.5 559.1h.01M659.4 564.5h.01M661.3 559.2h.01M663.2 559.0h.01M665.1 558.4h.01M667.0 565.6h.01M668.9 559.6h.01M670.8 559.3h.01M672.6 559.8h.01M674.5 559.2h.01M676.4 559.0h.01M678.3 559.0h.01M680.2 563.5h.01M682.1 561.4h.01M684.0 559.2h.01M685.9 558.7h.01M687.8 559.9h.01M689.7 559.5h.01M691.5 559.0h.01M693.4 558.5h.01M695.3 559.2h.01M697.2 561.4h.01M699.1 559.0h.01M701.0 559.1h.01M702.9 561.5h.01M704.8 558.9h.01M706.7 562.7h.01M708.6 562.3h.01M710.5 558.5h.01M712.3 558.8h.01M714.2 559.2h.01M716.1 563.1h.01M718.0 562.6h.01M719.9 563.0h.01M721.8 559.6h.01M723.7 564.1h.01M725.6 561.9h.01M727.5 558.7h.01M729.4 561.4h.01M731.2 560.7h.01M733.1 559.1h.01M735.0 559.3h.01M736.9 558.7h.01M738.8 566.3h.01M740.7 558.4h.01M742.6 564.1h.01M744.5 560.0h.01M746.4 562.7h.01M748.3 560.7h.01M750.2 565.9h.01M752.0 559.2h.01M753.9 560.2h.01M755.8 559.4h.01M757.7 561.8h.01M759.6 559.9h.01M761.5 559.7h.01M763.4 560.1h.01M765.3 561.4h.01M767.2 558.6h.01M769.1 561.1h.01M771.0 563.5h.01M772.8 559.7h.01M774.7 559.5h.01M776.6 559.7h.01M778.5 559.3h.01M780.4 559.1h.01M782.3 559.3h.01M784.2 560.6h.01M786.1 561.9h.01M788.0 558.6h.01M789.9 559.4h.01M791.8 562.4h.01M793.6 559.8h.01M795.5 558.7h.01M797.4 561.0h.01M799.3 562.0h.01M801.2 559.0h.01M803.1 565.5h.01M805.0 561.2h.01M806.9 559.0h.01M808.8 559.7h.01M810.7 559.9h.01M812.5 560.4h.01M814.4 561.5h.01M816.3 559.8h.01M818.2 559.6h.01M820.1 558.7h.01M822.0 558.1h.01M823.9 564.0h.01M825.8 559.3h.01M827.7 559.3h.01M829.6 576.1h.01M831.5 559.8h.01M833.3 559.3h.01M835.2 559.2h.01M837.1 559.1h.01M839.0 559.4h.01M840.9 562.3h.01M842.8 559.3h.01M844.7 558.8h.01M846.6 558.9h.01M848.5 559.2h.01M850.4 559.1h.01M852.2 559.5h.01M854.1 559.3h.01M856.0 558.7h.01M857.9 563.2h.01M859.8 559.2h.01M861.7 558.8h.01M863.6 559.2h.01M865.5 559.0h.01M867.4 562.8h.01M869.3 559.1h.01M871.2 558.6h.01M873.0 562.8h.01M874.9 558.8h.01M876.8 558.8h.01M878.7 559.5h.01M880.6 558.8h.01M882.5 559.6h.01M884.4 562.8h.01M886.3 559.7h.01M888.2 559.3h.01M890.1 559.6h.01M892.0 560.6h.01M893.8 559.5h.01M895.7 559.2h.01M897.6 561.9h.01M899.5 567.5h.01M901.4 559.5h.01M903.3 559.3h.01M905.2 559.0h.01M907.1 559.4h.01M909.0 563.5h.01M910.9 560.3h.01M912.8 561.7h.01M914.6 559.6h.01M916.5 558.9h.01M918.4 563.0h.01M920.3 562.1h.01M922.2 558.3h.01M924.1 559.2h.01M926.0 562.7h.01M927.9 559.2h.01M929.8 559.0h.01M931.7 559.1h.01M933.5 562.2h.01M935.4 559.7h.01M937.3 559.7h.01M939.2 564.4h.01M941.1 559.9h.01M943.0 564.2h.01M944.9 558.7h.01M946.8 559.9h.01M948.7 562.0h.01M950.6 561.4h.01M952.5 559.0h.01M954.3 563.7h.01M956.2 561.2h.01M958.1 559.7h.01M960.0 559.7h.01M961.9 559.1h.01M963.8 560.0h.01M965.7 559.5h.01M967.6 562.0h.01M969.5 559.6h.01M971.4 559.5h.01M973.2 559.9h.01M975.1 561.4h.01M977.0 558.7h.01M978.9 561.0h.01M980.8 559.7h.01M982.7 559.9h.01M984.6 560.5h.01M986.5 562.7h.01M988.4 558.7h.01M990.3 560.3h.01M992.2 559.3h.01M994.0 559.4h.01M995.9 559.1h.01M997.8 559.0h.01M999.7 561.9h.01M1001.6 563.9h.01M1003.5 558.6h.01M1005.4 563.6h.01M1007.3 559.3h.01M1009.2 559.9h.01M1011.1 560.4h.01M1013.0 565.5h.01M1014.8 559.7h.01M1016.7 563.0h.01M1018.6 560.2h.01M1020.5 562.0h.01M1022.4 559.0h.01M1024.3 561.2h.01M1026.2 559.2h.01M1028.1 558.4h.01M1030.0 564.4h.01M1031.9 558.3h.01M1033.8 559.9h.01M1035.6 559.9h.01M1037.5 560.3h.01M1039.4 559.1h.01M1041.3 560.1h.01M1043.2 563.4h.01M1045.1 559.5h.01M1047.0 560.5h.01M1048.9 558.3h.01M1050.8 559.6h.01M1052.7 558.5h.01M1054.5 559.1h.01M1056.4 559.3h.01M1058.3 559.5h.01M1060.2 558.9h.01M1062.1 564.0h.01M1064.0 566.3h.01M1065.9 561.1h.01M1067.8 558.8h.01M1069.7 560.1h.01M1071.6 560.9h.01M1073.5 559.6h.01M1075.3 559.2h.01M1077.2 560.7h.01M1079.1 559.5h.01M1081.0 565.7h.01M1082.9 560.4h.01M1084.8 561.6h.01M1086.7 560.2h.01M1088.6 559.0h.01M1090.5 559.7h.01M1092.4 563.0h.01M1094.2 562.7h.01M1096.1 559.3h.01M1098.0 558.7h.01M1099.9 559.3h.01M1101.8 559.1h.01M1103.7 558.7h.01M1105.6 561.1h.01M1107.5 558.0h.01M1109.4 559.6h.01M1111.3 562.8h.01M1113.2 559.6h.01M1115.0 560.2h.01M1116.9 559.8h.01M1118.8 562.8h.01M1120.7 562.8h.01M1122.6 559.3h.01M1124.5 562.6h.01M1126.4 558.6h.01M1128.3 559.3h.01M1130.2 560.2h.01M1132.1 559.5h.01M1134.0 559.0h.01M1135.8 559.3h.01M1137.7 559.6h.01M1139.6 559.6h.01M1141.5 559.5h.01M1143.4 565.6h.01M1145.3 559.0h.01M1147.2 561.2h.01M1149.1 559.1h.01M1151.0 563.2h.01M1152.9 558.9h.01M1154.8 560.4h.01M1156.6 558.5h.01M1158.5 559.1h.01M1160.4 563.2h.01M1162.3 559.0h.01M1164.2 561.3h.01M1166.1 559.1h.01M1168.0 560.1h.01M1169.9 559.6h.01M1171.8 559.3h.01M1173.7 559.4h.01M1175.5 560.5h.01M1177.4 562.6h.01M1179.3 559.9h.01M1181.2 559.2h.01M1183.1 560.1h.01M1185.0 565.7h.01M1186.9 562.1h.01M1188.8 559.1h.01M1190.7 562.5h.01M1192.6 560.0h.01M1194.5 559.1h.01M1196.3 559.0h.01M1198.2 559.5h.01M1200.1 559.8h.01M1202.0 561.6h.01M1203.9 558.8h.01M1205.8 558.5h.01M1207.7 558.8h.01M1209.6 558.9h.01M1211.5 560.1h.01M1213.4 559.4h.01M1215.2 563.6h.01M1217.1 558.6h.01M1219.0 559.3h.01M1220.9 559.6h.01M1222.8 558.9h.01M1224.7 561.5h.01M1226.6 560.1h.01M1228.5 560.6h.01M1230.4 559.4h.01M1232.3 564.1h.01M1234.2 563.1h.01M1236.0 559.1h.01M1237.9 559.7h.01M1239.8 563.8h.01M1241.7 559.8h.01M1243.6 558.7h.01M1245.5 559.8h.01M1247.4 562.9h.01M1249.3 565.8h.01M1251.2 560.8h.01M1253.1 559.3h.01M1255.0 561.0h.01M1256.8 559.5h.01M1258.7 558.7h.01M1260.6 559.6h.01M1262.5 559.8h.01M1264.4 558.4h.01M1266.3 559.0h.01M1268.2 558.7h.01M1270.1 559.6h.01M1272.0 559.9h.01M1273.9 561.3h.01M1275.8 563.1h.01M1277.6 559.8h.01M1279.5 558.8h.01M1281.4 558.3h.01M1283.3 559.9h.01M1285.2 560.3h.01M1287.1 559.1h.01M1289.0 558.5h.01M1290.9 560.4h.01M1292.8 560.6h.01M1294.7 561.4h.01M1296.5 561.4h.01M1298.4 560.0h.01M1300.3 563.0h.01M1302.2 560.0h.01M1304.1 559.2h.01M1306.0 559.7h.01" fill="none" stroke="#c233b3" stroke-width="6.600" stroke-linecap="round"/>
<defs><linearGradient id="sl" x1="0" y1="0" x2="0" y2="1"><stop offset="0" stop-color="#3aa6f5"/><stop offset="1" stop-color="#1f8be8"/></linearGradient><linearGradient id="hd" x1="0" y1="0" x2="0" y2="1"><stop offset="0" stop-color="#fafafa"/><stop offset="1" stop-color="#cfd2d8"/></linearGradient></defs>
<rect x="96" y="895.500" width="1210" height="21.500" fill="url(#sl)"/>
<rect x="96.5" y="893.500" width="29" height="25.500" rx="2" fill="url(#hd)" stroke="#8d929c" stroke-width="1.500"/>
<path d="M107 900v12M111 900v12M115 900v12" stroke="#4a4f7a" stroke-width="1.600"/>
<rect x="1276.5" y="893.500" width="29" height="25.500" rx="2" fill="url(#hd)" stroke="#8d929c" stroke-width="1.500"/>
<path d="M1287 900v12M1291 900v12M1295 900v12" stroke="#4a4f7a" stroke-width="1.600"/>
<path d="M224 940h18" stroke="#c233b3" stroke-width="4.600" stroke-linecap="round"/>
<circle cx="233" cy="940" r="3.600" fill="#fff" stroke="#c233b3" stroke-width="2"/>
<text x="258" y="945.5" font-size="16.400" fill="#222">FPS</text>
<path d="M320 940h18" stroke="#19b24b" stroke-width="4.600" stroke-linecap="round"/>
<text x="354" y="945.5" font-size="16.400" fill="#222">Smooth</text>
<path d="M439.5 940h18" stroke="#129a8c" stroke-width="4.600" stroke-linecap="round"/>
<text x="473.5" y="945.5" font-size="16.400" fill="#222">1%Low(FPS)</text>
<path d="M599.5 940h18" stroke="#3d2bf5" stroke-width="4.600" stroke-linecap="round"/>
<text x="632.5" y="945.5" font-size="16.400" fill="#222">SmallJank</text>
<path d="M737 940h18" stroke="#f36a2a" stroke-width="4.600" stroke-linecap="round"/>
<circle cx="746" cy="940" r="3.600" fill="#fff" stroke="#f36a2a" stroke-width="2"/>
<text x="771" y="945.5" font-size="16.400" fill="#222">Jank</text>
<path d="M835.5 940h18" stroke="#e0182d" stroke-width="4.600" stroke-linecap="round"/>
<circle cx="844.5" cy="940" r="3.600" fill="#fff" stroke="#e0182d" stroke-width="2"/>
<text x="869" y="945.5" font-size="16.400" fill="#222">BigJank</text>
<path d="M958 940h18" stroke="#2f7df6" stroke-width="4.600" stroke-linecap="round"/>
<text x="990" y="945.5" font-size="16.400" fill="#222">Stutter</text>
<path d="M1068.5 940h18" stroke="#17c3dc" stroke-width="4.600" stroke-linecap="round"/>
<text x="1101.5" y="945.5" font-size="16.400" fill="#222">InterFrame</text>
<text x="1199" y="945.5" font-size="16" fill="#2f5bf0">全隐藏</text>
</svg>
</div></body></html>
